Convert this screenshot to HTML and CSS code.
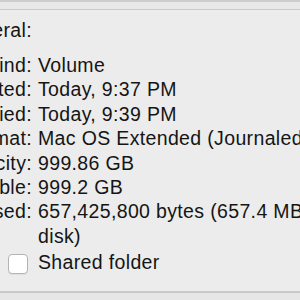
FILE: index.html
```html
<!DOCTYPE html>
<html lang="en">
<head>
    <meta charset="UTF-8">
    <title>Volume Info</title>
    <link rel="stylesheet" href="styles.css">
</head>
<body>
    <div class="panel">
        <div class="top-edge"></div>

        <div class="info">
            <div class="section-title">General:</div>

            <div class="rows">
                <div class="label">Kind:</div>
                <div class="value">Volume</div>

                <div class="label">Created:</div>
                <div class="value">Today, 9:37 PM</div>

                <div class="label">Modified:</div>
                <div class="value">Today, 9:39 PM</div>

                <div class="label">Format:</div>
                <div class="value">Mac OS Extended (Journaled)</div>

                <div class="label">Capacity:</div>
                <div class="value">999.86 GB</div>

                <div class="label">Available:</div>
                <div class="value">999.2 GB</div>

                <div class="label">Used:</div>
                <div class="value">657,425,800 bytes (657.4 MB on disk)</div>
            </div>

            <label class="share">
                <span class="check"></span>
                <span class="share-text">Shared folder</span>
            </label>
        </div>

        <div class="bottom-edge"></div>
    </div>
</body>
</html>
```

FILE: styles.css
```css
* {
    margin: 0;
    padding: 0;
    box-sizing: border-box;
}

body {
    width: 300px;
    height: 300px;
    overflow: hidden;
    background: #ececec;
    font-family: 'Liberation Sans', Arial, sans-serif;
    font-size: 19.5px;
    letter-spacing: 0.35px;
    color: #151515;
}

.panel {
    display: flex;
    flex-direction: column;
    height: 300px;
}

.top-edge {
    height: 10px;
    background: #e8e8e8;
    border-top: 2px solid #cdcdcd;
    border-bottom: 1px solid #cacaca;
}

.info {
    flex: 1;
    margin-left: -88px;
    width: 440px;
    padding-top: 8px;
}

.section-title {
    width: 120px;
    text-align: right;
    line-height: 24px;
    margin-bottom: 11px;
}

.rows {
    display: grid;
    grid-template-columns: 120px 310px;
    column-gap: 6px;
    line-height: 24.4px;
}

.label {
    text-align: right;
    white-space: nowrap;
}

.share {
    display: grid;
    grid-template-columns: 120px 310px;
    column-gap: 6px;
    align-items: center;
    margin-top: 2px;
    line-height: 24px;
}

.check {
    justify-self: end;
    margin-right: 4px;
    margin-top: 3px;
    width: 20px;
    height: 20px;
    background: #ffffff;
    border: 1px solid #b4b4b4;
    border-radius: 4px;
    box-shadow: 0 1px 1px rgba(0, 0, 0, 0.06);
}

.bottom-edge {
    height: 9px;
    background: #e6e6e6;
    border-top: 2px solid #c9c9c9;
}
```
